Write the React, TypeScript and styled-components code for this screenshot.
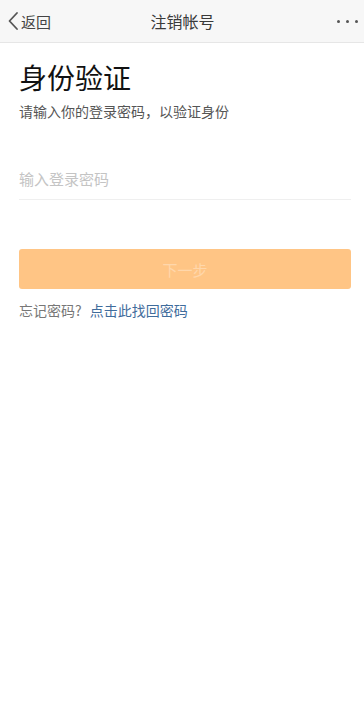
import React from "react";
import styled, { createGlobalStyle } from "styled-components";

const Global = createGlobalStyle`
  html, body { margin: 0; padding: 0; background: #ffffff; }
  body { font-family: "Noto Sans CJK SC", "Noto Sans", sans-serif; }
  * { box-sizing: border-box; }
`;

const Page = styled.div`
  width: 364px;
  min-height: 724px;
  background: #fff;
  display: flex;
  flex-direction: column;
`;

const NavBar = styled.div`
  height: 43px;
  background: #f7f7f7;
  border-bottom: 1px solid #e6e6e6;
  display: grid;
  grid-template-columns: 1fr auto 1fr;
  align-items: center;
  padding: 0 6px 0 7px;
`;

const Back = styled.div`
  display: flex;
  align-items: center;
  gap: 2px;
  color: #444;
  font-size: 15px;
`;

const Title = styled.div`
  font-size: 16px;
  color: #3a3a3a;
`;

const Dots = styled.div`
  justify-self: end;
  display: flex;
  gap: 6px;
`;

const Dot = styled.span`
  width: 3px;
  height: 3px;
  border-radius: 50%;
  background: #555;
`;

const Content = styled.div`
  padding: 0 13px 0 19px;
  display: flex;
  flex-direction: column;
`;

const Heading = styled.h1`
  margin: 14px 0 0;
  font-size: 28px;
  font-weight: 400;
  color: #111;
  line-height: 40px;
`;

const Sub = styled.p`
  margin: 4px 0 0;
  font-size: 14px;
  color: #555;
  line-height: 20px;
`;

const InputRow = styled.div`
  margin-top: 36px;
  height: 43px;
  border-bottom: 1px solid #efefef;
  display: flex;
  align-items: center;
`;

const Input = styled.input`
  border: none;
  outline: none;
  width: 100%;
  padding: 0;
  font-size: 15px;
  font-family: "Noto Sans CJK SC", sans-serif;
  color: #333;
  background: transparent;
  &::placeholder { color: #c4c4c4; }
`;

const Button = styled.button`
  margin-top: 49px;
  height: 40px;
  border: none;
  border-radius: 3px;
  background: #ffc585;
  color: #ffd7ab;
  font-size: 15px;
  font-family: "Noto Sans CJK SC", sans-serif;
`;

const Forgot = styled.div`
  margin-top: 11px;
  font-size: 14px;
  color: #777;
  line-height: 20px;
`;

const Link = styled.span`
  color: #3f6c9c;
  margin-left: 8px;
`;

export default function App() {
  return (
    <Page>
      <Global />
      <NavBar>
        <Back>
          <svg width="12" height="20" viewBox="0 0 12 20">
            <path d="M10 2 L2.5 10 L10 18" fill="none" stroke="#555" strokeWidth="1.8" strokeLinecap="round" strokeLinejoin="round" />
          </svg>
          <span>返回</span>
        </Back>
        <Title>注销帐号</Title>
        <Dots>
          <Dot />
          <Dot />
          <Dot />
        </Dots>
      </NavBar>
      <Content>
        <Heading>身份验证</Heading>
        <Sub>请输入你的登录密码，以验证身份</Sub>
        <InputRow>
          <Input type="password" placeholder="输入登录密码" />
        </InputRow>
        <Button>下一步</Button>
        <Forgot>
          忘记密码?<Link>点击此找回密码</Link>
        </Forgot>
      </Content>
    </Page>
  );
}
